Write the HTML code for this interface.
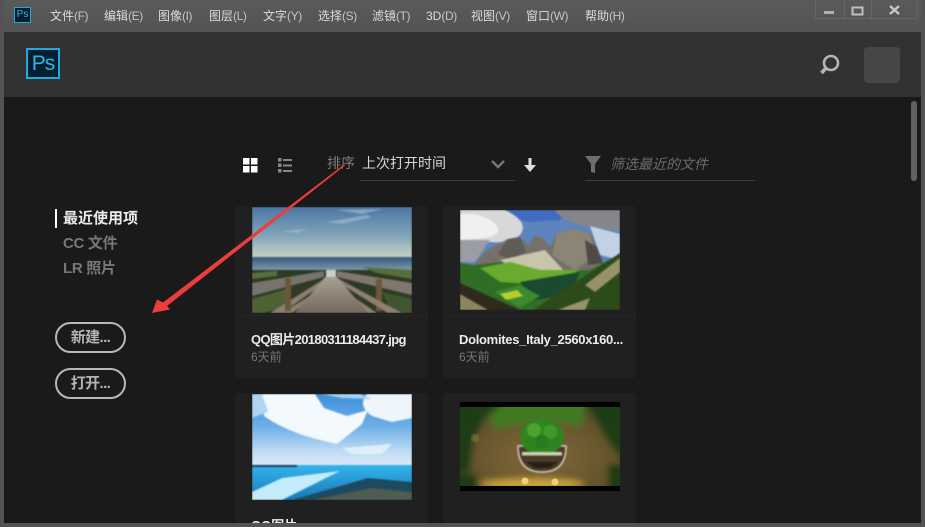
<!DOCTYPE html>
<html><head><meta charset="utf-8">
<style>
*{box-sizing:border-box}
html,body{margin:0;padding:0;width:925px;height:527px;overflow:hidden;background:#1a1a1a}
body{position:relative;font-family:"Liberation Sans","Noto Sans CJK SC",sans-serif}
.a{position:absolute;white-space:nowrap}
.m{top:8px;font-size:12px;line-height:16px;color:#dcdcdc}
.m span{color:#c4c4c4;font-size:12px;letter-spacing:-.4px}
.card{position:absolute;width:193px;background:#202020;border-radius:3px}
.t{font-size:13px;font-weight:bold;color:#ececec;line-height:16px}
.s{font-size:12px;color:#777;line-height:14px}
.btn{position:absolute;left:55px;width:71px;height:31px;border:2px solid #b8b8b8;border-radius:16px;color:#b4b4b4;font-weight:bold;font-size:15px;line-height:27px;text-align:center;letter-spacing:-.6px}
svg{position:absolute;display:block}
.ph{filter:blur(.8px)}
.wrap{position:absolute;overflow:hidden}
.wrap svg{left:0;top:0}
</style></head>
<body>
<div class="a" style="left:0;top:0;width:925px;height:32px;background:linear-gradient(#5a5a5a,#535353)"></div>
<div class="a" style="left:0;top:0;width:4px;height:527px;background:#535353"></div>
<div class="a" style="left:921px;top:0;width:4px;height:527px;background:#535353"></div>
<div class="a" style="left:0;top:523px;width:925px;height:4px;background:#535353"></div>
<div class="a" style="left:4px;top:32px;width:917px;height:65px;background:#323232"></div>

<div class="a" style="left:14px;top:7px;width:17px;height:16px;background:#05202e;border:1px solid #20a8d8;color:#30b8e8;font-size:10px;line-height:14px;text-align:center">Ps</div>
<div class="a m" style="left:50px">文件<span>(F)</span></div>
<div class="a m" style="left:104px">编辑<span>(E)</span></div>
<div class="a m" style="left:158px">图像<span>(I)</span></div>
<div class="a m" style="left:209px">图层<span>(L)</span></div>
<div class="a m" style="left:263px">文字<span>(Y)</span></div>
<div class="a m" style="left:318px">选择<span>(S)</span></div>
<div class="a m" style="left:372px">滤镜<span>(T)</span></div>
<div class="a m" style="left:426px">3D<span>(D)</span></div>
<div class="a m" style="left:471px">视图<span>(V)</span></div>
<div class="a m" style="left:526px">窗口<span>(W)</span></div>
<div class="a m" style="left:585px">帮助<span>(H)</span></div>

<svg style="left:815px;top:0" width="110" height="20">
<path d="M.5 0V16.500q0 2 2 2H100q2 0 2-2V0M29.500 0V19M56.500 0V19" fill="none" stroke="#666" stroke-width="1"/>
<rect x="9" y="11" width="10" height="3" fill="#b0b0b0"/>
<rect x="37.500" y="7.500" width="10" height="7" fill="none" stroke="#c0c0c0" stroke-width="2"/>
<path d="M75 6L84 14M84 6L75 14" stroke="#c8c8c8" stroke-width="2.400"/>
</svg>

<div class="a" style="left:26px;top:48px;width:34px;height:31px;background:#03202f;border:2px solid #1fa9dc;color:#2cb5e8;font-size:21px;line-height:28px;text-align:center;letter-spacing:-1px">Ps</div>

<svg style="left:818px;top:53px" width="24" height="24">
<circle cx="13" cy="10" r="7" fill="none" stroke="#b4b4b4" stroke-width="2.600"/>
<path d="M8 15L3.500 20" stroke="#b4b4b4" stroke-width="3.600"/>
</svg>
<div class="a" style="left:864px;top:47px;width:36px;height:36px;background:#474747;border-radius:4px"></div>

<div class="a" style="left:911px;top:101px;width:6px;height:80px;background:#626262;border-radius:3px"></div>

<svg style="left:243px;top:158px" width="16" height="15"><path d="M0 0h6.500v6.500H0zM8 0h6.500v6.500H8zM0 8h6.500v6.500H0zM8 8h6.500v6.500H8z" fill="#fff"/></svg>
<svg style="left:278px;top:158px" width="16" height="15"><path d="M0 0h3.500v3.500H0zM0 5.500h3.500v3.500H0zM0 11h3.500v3.500H0z" fill="#888"/><path d="M5 1h9v2H5zM5 6.500h9v2H5zM5 12h9v2H5z" fill="#888"/></svg>

<div class="a" style="left:327px;top:154px;font-size:14px;line-height:18px;color:#7c7c7c">排序</div>
<div class="a" style="left:362px;top:154px;font-size:14px;line-height:18px;color:#d8d8d8">上次打开时间</div>
<div class="a" style="left:360px;top:180px;width:155px;height:1px;background:#3a3a3a"></div>
<svg style="left:490px;top:159px" width="16" height="12"><path d="M2 2L8 8L14 2" fill="none" stroke="#777" stroke-width="2.400"/></svg>
<svg style="left:523px;top:157px" width="14" height="16"><path d="M7 1V11" stroke="#ddd" stroke-width="3"/><path d="M1 8L7 15L13 8z" fill="#ddd"/></svg>
<svg style="left:584px;top:155px" width="18" height="20"><path d="M1 1H17L11 9V18L7 17V9z" fill="#6e6e6e"/></svg>
<div class="a" style="left:610px;top:155px;font-size:14px;line-height:18px;color:#6c6c6c;font-style:italic">筛选最近的文件</div>
<div class="a" style="left:585px;top:180px;width:170px;height:1px;background:#3a3a3a"></div>

<div class="a" style="left:55px;top:209px;width:2px;height:19px;background:#fff"></div>
<div class="a" style="left:63px;top:210px;font-size:15px;line-height:18px;font-weight:bold;color:#ececec">最近使用项</div>
<div class="a" style="left:63px;top:235px;font-size:15px;line-height:18px;font-weight:bold;color:#787878;letter-spacing:-.3px">CC 文件</div>
<div class="a" style="left:63px;top:260px;font-size:15px;line-height:18px;font-weight:bold;color:#787878;letter-spacing:-.3px">LR 照片</div>
<div class="btn" style="top:322px">新建...</div>
<div class="btn" style="top:368px">打开...</div>

<div class="card" style="left:235px;top:206px;height:172px"></div>
<div class="card" style="left:443px;top:206px;height:172px"></div>
<div class="card" style="left:235px;top:393px;height:130px"></div>
<div class="card" style="left:443px;top:393px;height:130px"></div>

<div class="wrap" style="left:252px;top:207px;width:160px;height:106px">
<svg class="ph" width="160" height="106" viewBox="0 0 160 106">
<defs>
<linearGradient id="s1" x1="0" y1="0" x2="0" y2="1"><stop offset="0" stop-color="#4b76a4"/><stop offset=".55" stop-color="#7fa3b8"/><stop offset="1" stop-color="#c8d4c4"/></linearGradient>
<linearGradient id="w1" x1="0" y1="0" x2="0" y2="1"><stop offset="0" stop-color="#35597c"/><stop offset="1" stop-color="#8aa6b4"/></linearGradient>
<linearGradient id="d1" x1="0" y1="0" x2="0" y2="1"><stop offset="0" stop-color="#a89f94"/><stop offset="1" stop-color="#75695e"/></linearGradient>
</defs>
<rect width="160" height="51" fill="url(#s1)"/>
<path d="M75 15L115 8L120 10L90 17zM85 3L130 2L110 7zM30 24L55 22L45 26z" fill="#a8c0d4" opacity=".6"/>
<rect y="50" width="160" height="16" fill="url(#w1)"/>
<rect y="63" width="160" height="43" fill="#2e3a24"/>
<path d="M0 66L25 64V69L0 72zM110 60L160 63V72L125 66z" fill="#56703c"/>
<path d="M0 76L72 64V70L0 89z" fill="#77736d"/>
<path d="M85 64L160 76V88L85 70z" fill="#807870"/>
<path d="M0 92L35 82V100L10 106H0z" fill="#4e6236"/>
<path d="M130 85L160 92V106H140z" fill="#3f5630"/>
<path d="M18 106L72 72V76L30 106zM30 106L72 80V83L40 106z" fill="#8c8072"/>
<rect x="33" y="71" width="6" height="33" fill="#6e563a"/>
<rect x="124" y="72" width="6" height="32" fill="#6e563a"/>
<path d="M150 106L87 72V76L136 106zM125 106L87 80V83L115 106z" fill="#8c8072"/>
<path d="M73 70H85L116 106H43z" fill="url(#d1)"/>
<rect x="74" y="63" width="10" height="7" fill="#c8cdc8"/>
</svg></div>

<div class="wrap" style="left:460px;top:210px;width:160px;height:100px">
<svg class="ph" width="160" height="100" viewBox="0 0 160 100">
<rect width="160" height="100" fill="#5d84bc"/>
<path d="M38 0H110L100 10L70 12L50 8z" fill="#3f6cc0"/>
<path d="M95 0H160V22L125 16Q100 10 95 0z" fill="#84868c"/>
<path d="M130 16L160 24V50L140 45z" fill="#c0d2e4"/>
<path d="M0 0H45Q70 12 60 25Q50 34 30 32L0 40z" fill="#d8d8da"/>
<path d="M0 4Q25 3 35 14Q45 24 25 28L0 30z" fill="#f0f0f2"/>
<path d="M0 30H30L15 52H0z" fill="#9a9ea4"/>
<path d="M15 53L27 40L48 29L60 27L68 35L75 26L83 28L90 37L97 23L113 19L130 23L137 37L143 53L135 62H30z" fill="#75706a"/>
<path d="M97 23L113 19L130 23L135 45L115 60L92 45z" fill="#8c8576"/>
<path d="M48 29L60 27L66 42L50 50L38 44z" fill="#5f5b58"/>
<path d="M40 50L85 40L105 62L60 62z" fill="#c8c6aa"/>
<path d="M125 30L137 37L143 53L128 55z" fill="#4e4a48"/>
<path d="M0 53L15 55L40 52L70 62L130 60L160 44V100H0z" fill="#2f6e24"/>
<path d="M20 58L50 52L80 60L120 60L90 75L40 72z" fill="#6aaa2e"/>
<path d="M60 72L120 62L110 85L75 90z" fill="#1a4a30"/>
<path d="M35 82L60 75L80 86L60 98z" fill="#3c8a30"/>
<path d="M40 84l17-4l6 6l-17 4z" fill="#b8cc2e"/>
<path d="M73 100L160 43V100z" fill="#2c4a1a"/>
<path d="M125 75L160 48V62L135 82zM108 96L130 88L125 100H98z" fill="#98926a"/>
<path d="M0 73L60 100H0z" fill="#2e2a1e"/>
<path d="M0 84L28 100H0z" fill="#8c8660"/>
</svg></div>

<div class="wrap" style="left:252px;top:394px;width:160px;height:106px">
<svg class="ph" width="160" height="106" viewBox="0 0 160 106">
<defs>
<linearGradient id="s3" x1="0" y1="0" x2="0" y2="1"><stop offset="0" stop-color="#3f8fd8"/><stop offset=".45" stop-color="#6caee8"/><stop offset=".8" stop-color="#c0dcf4"/><stop offset="1" stop-color="#dceafa"/></linearGradient>
<linearGradient id="w3" x1="0" y1="0" x2="0" y2="1"><stop offset="0" stop-color="#34b4ec"/><stop offset="1" stop-color="#1878b8"/></linearGradient>
</defs>
<rect width="160" height="72" fill="url(#s3)"/>
<path d="M10 0H63L72 14L95 22L116 16L110 30L85 50L60 44Q30 35 12 22z" fill="#f4f9fd"/>
<path d="M115 0H160V24L140 28L120 22Q105 12 115 0z" fill="#eef6fc"/>
<path d="M0 0H10L16 18L0 24z" fill="#b0d4f2"/>
<path d="M70 0H108L120 5L90 4z" fill="#a8d2f2"/>
<path d="M90 54L140 50L130 60L100 60z" fill="#e0eefa"/>
<rect y="71" width="160" height="35" fill="url(#w3)"/>
<rect y="71" width="45" height="2" fill="#153c60"/>
<path d="M0 98L30 84L88 77L70 86L30 106H0z" fill="#c4ecfa"/>
<path d="M40 106L116 84L160 88V106z" fill="#1d4a60"/>
<path d="M60 106L120 94L160 98V106z" fill="#4e5c52"/>
</svg></div>

<div class="wrap" style="left:460px;top:402px;width:160px;height:89px;background:#000">
<svg width="160" height="89" viewBox="0 0 160 89">
<defs>
<radialGradient id="b4" cx=".5" cy=".6" r=".65"><stop offset="0" stop-color="#85683a"/><stop offset=".7" stop-color="#5f5229"/><stop offset="1" stop-color="#3a3f1c"/></radialGradient>
<filter id="bb" x="-10%" y="-10%" width="120%" height="120%"><feGaussianBlur stdDeviation="3.500"/></filter>
<clipPath id="c4"><rect y="5" width="160" height="79"/></clipPath>
</defs>
<g clip-path="url(#c4)">
<g filter="url(#bb)">
<rect x="-10" y="-5" width="180" height="100" fill="url(#b4)"/>
<path d="M25 0H125L122 24Q80 15 35 28z" fill="#3f7a22"/>
<path d="M-5 0H45L25 16L14 40L10 70L-5 72zM125 0H165V62L148 40L135 18z" fill="#1f3d18"/>
<ellipse cx="72" cy="82" rx="52" ry="5" fill="#d0a840"/>
<path d="M-5 72h22v18H-5zM148 62h17v28h-17z" fill="#1f3a14"/>
</g>
<circle cx="15" cy="36" r="3" fill="#d8b050" filter="url(#bb)"/>
<circle cx="65" cy="79" r="3.500" fill="#f0d070"/><circle cx="95" cy="80" r="3.500" fill="#f0d070"/>
</g>
<g class="ph">
<path d="M58 44Q58 70 82 70Q106 70 106 44z" fill="#4a3a28" stroke="#d4d4c4" stroke-width="1.500"/>
<rect x="80" y="42" width="4" height="14" fill="#4a3a28"/>
<ellipse cx="82" cy="35" rx="22" ry="18" fill="#2f8420"/>
<circle cx="74" cy="28" r="7" fill="#4aa42e"/><circle cx="90" cy="30" r="7" fill="#3f9a2a"/><circle cx="82" cy="40" r="7" fill="#2a7a1e"/>
<path d="M62 50H102V53.500H62z" fill="#d0d0b8"/>
<path d="M66 60H98L90 66H74z" fill="#2a1e14"/>
</g>
</svg></div>

<div class="a" style="left:235px;top:315px;width:193px;height:1px;background:#262626"></div>
<div class="a" style="left:443px;top:315px;width:193px;height:1px;background:#262626"></div>
<div class="a t" style="left:251px;top:332px;letter-spacing:-.65px">QQ图片20180311184437.jpg</div>
<div class="a s" style="left:251px;top:350px">6天前</div>
<div class="a t" style="left:459px;top:332px;letter-spacing:-.3px">Dolomites_Italy_2560x160...</div>
<div class="a s" style="left:459px;top:350px">6天前</div>
<div class="a t" style="left:251px;top:518px;height:5px;overflow:hidden">QQ图片</div>

<svg style="left:0;top:0" width="925" height="527">
<path d="M345 165.500L167 306L170 309.500L152 313L157 299.500L163 302.500L344 164.500z" fill="#ee3b3b"/>
</svg>
</body></html>
